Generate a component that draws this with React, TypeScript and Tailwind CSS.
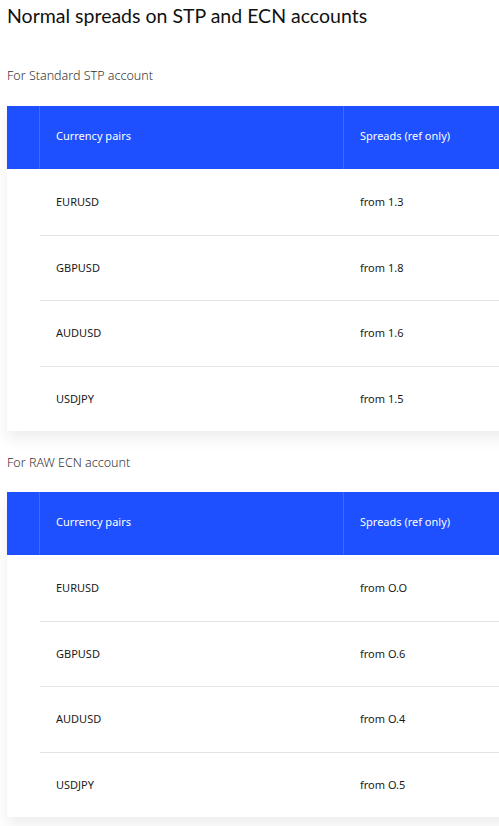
import React from 'react';

interface SpreadRow {
  pair: string;
  spread: string;
}

const stpRows: SpreadRow[] = [
  { pair: 'EURUSD', spread: 'from 1.3' },
  { pair: 'GBPUSD', spread: 'from 1.8' },
  { pair: 'AUDUSD', spread: 'from 1.6' },
  { pair: 'USDJPY', spread: 'from 1.5' },
];

const ecnRows: SpreadRow[] = [
  { pair: 'EURUSD', spread: 'from O.O' },
  { pair: 'GBPUSD', spread: 'from O.6' },
  { pair: 'AUDUSD', spread: 'from O.4' },
  { pair: 'USDJPY', spread: 'from O.5' },
];

function SpreadTable({ rows }: { rows: SpreadRow[] }) {
  return (
    <div className="ml-[7px] w-[540px] bg-white shadow-[0_8px_14px_rgba(0,0,0,0.07)]">
      {/* Header */}
      <div className="flex h-[63px] bg-[#1e50ff] text-[11px] text-white">
        <div className="w-[33px] shrink-0 border-r border-[#3d69ff]" />
        <div className="flex w-[304px] shrink-0 items-center border-r border-[#3d69ff] pb-[3px] pl-4">Currency pairs</div>
        <div className="flex flex-1 items-center pb-[3px] pl-4">Spreads (ref only)</div>
      </div>

      {/* Rows */}
      {rows.map((row, i) => (
        <div key={row.pair} className="flex h-[65.5px] text-[11px] text-[#1a1a1a]">
          <div className="w-[33px] shrink-0" />
          <div className={`flex flex-1 ${i > 0 ? 'border-t border-[#e3e3e3]' : ''}`}>
            <div className="flex w-[304px] shrink-0 items-center pl-4">{row.pair}</div>
            <div className="flex flex-1 items-center pl-4">{row.spread}</div>
          </div>
        </div>
      ))}
    </div>
  );
}

export default function App() {
  return (
    <div className="h-[826px] w-[499px] overflow-hidden bg-white font-['Noto_Sans',sans-serif]">
      <h1 className="pl-[7px] pt-[3px] font-['Lato',sans-serif] text-[19.5px] leading-[26px] font-normal text-[#111]">
        Normal spreads on STP and ECN accounts
      </h1>

      <p className="mt-[38px] pl-[7px] text-[12.5px] leading-[18px] font-light text-[#333]">For Standard STP account</p>
      <div className="mt-[21px]">
        <SpreadTable rows={stpRows} />
      </div>

      <p className="mt-[23px] pl-[7px] text-[12.5px] leading-[18px] font-light text-[#333]">For RAW ECN account</p>
      <div className="mt-[20px]">
        <SpreadTable rows={ecnRows} />
      </div>
    </div>
  );
}
